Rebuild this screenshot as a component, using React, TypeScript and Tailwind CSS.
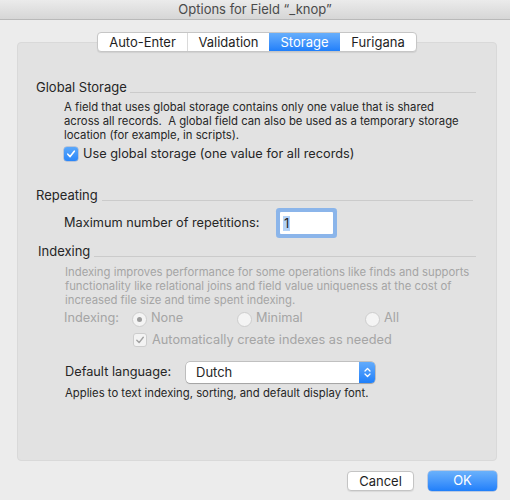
import React from 'react';

const font = { fontFamily: 'Inter, "Liberation Sans", Arial, sans-serif' };

function Heading({ label, gap = 'ml-[3px]' }: { label: string; gap?: string }) {
  return (
    <div className="flex h-[16px] items-end">
      <span className="text-[13px] leading-[16px] text-[#262626]">{label}</span>
      <div className={`mb-[2px] h-px flex-1 bg-[#cbcbcb] ${gap}`} />
    </div>
  );
}

function BlueCheck() {
  return (
    <span className="flex h-[14px] w-[14px] items-center justify-center rounded-[3px] bg-linear-to-b from-[#5aa8fb] to-[#2a86f9] shadow-[0_0_0_0.5px_rgba(0,60,160,0.35)]">
      <svg width="10" height="10" viewBox="0 0 10 10">
        <path d="M1.8 5.2 L4.1 7.6 L8.3 2.2" fill="none" stroke="#fff" strokeWidth="1.6" strokeLinecap="round" strokeLinejoin="round" />
      </svg>
    </span>
  );
}

function GrayCheck() {
  return (
    <span className="flex h-[14px] w-[14px] items-center justify-center rounded-[3px] border border-[#cdcdcd] bg-[#f3f3f3]">
      <svg width="10" height="10" viewBox="0 0 10 10">
        <path d="M1.8 5.2 L4.1 7.6 L8.3 2.2" fill="none" stroke="#a2a2a2" strokeWidth="1.4" strokeLinecap="round" strokeLinejoin="round" />
      </svg>
    </span>
  );
}

function Radio({ on }: { on?: boolean }) {
  return (
    <span className="mt-[3px] flex h-[15px] w-[15px] items-center justify-center rounded-full border border-[#cdcdcd] bg-[#f4f4f4]">
      {on && <span className="h-[5px] w-[5px] rounded-full bg-[#9c9c9c]" />}
    </span>
  );
}

export default function App() {
  return (
    <div className="flex h-[500px] w-[510px] flex-col overflow-hidden bg-[#ececec]" style={font}>
      {/* title bar */}
      <div className="flex h-[20px] items-center justify-center border-b border-[#b9b9b9] bg-linear-to-b from-[#ebebeb] to-[#d6d6d6] text-[13px] text-[#4a4a4a]">
        Options for Field “_knop”
      </div>

      {/* segmented tabs */}
      <div className="relative z-10 mt-[12px] flex pl-[97px]">
        <div className="flex h-[20px] overflow-hidden rounded-[4px] border border-[#c6c6c6] bg-white text-[13px] leading-[18px] text-[#1e1e1e] shadow-[0_1px_1px_rgba(0,0,0,0.08)]">
          <div className="flex w-[89px] items-center justify-center">Auto-Enter</div>
          <div className="flex w-[82px] items-center justify-center border-l border-[#dadada]">Validation</div>
          <div className="flex w-[71px] items-center justify-center bg-linear-to-b from-[#67aefb] to-[#1f7ffa] text-white">Storage</div>
          <div className="flex w-[76px] items-center justify-center">Furigana</div>
        </div>
      </div>

      {/* tab panel */}
      <div className="mx-[17px] mr-[13px] -mt-[10px] flex h-[419px] flex-col rounded-[4px] border border-[#d9d9d9] bg-[#e2e2e2] pl-[18px] pr-[20px] pt-[36px]">
        <Heading label="Global Storage" />
        <div className="ml-[28px] mt-[5px] text-[11.3px] leading-[14px] text-[#262626]">
          A field that uses global storage contains only one value that is shared
          <br />
          across all records.&nbsp; A global field can also be used as a temporary storage
          <br />
          location (for example, in scripts).
        </div>
        <div className="ml-[28px] mt-[4px] flex h-[16px] items-center gap-[5px] text-[12.75px] text-[#262626]">
          <BlueCheck />
          <span>Use global storage (one value for all records)</span>
        </div>

        <div className="mt-[25px] pr-[3px]">
          <Heading label="Repeating" gap="ml-[4px]" />
        </div>
        <div className="ml-[28px] mt-[9px] flex h-[22px] items-center text-[12.75px] text-[#262626]">
          <span className="w-[216px]">Maximum number of repetitions:</span>
          <div className="flex h-[22px] w-[53px] items-center rounded-[1px] bg-white pl-[3px] ring-[4px] ring-[#8bb5ea]">
            <span className="bg-[#b4d3f8] px-[1px] text-[13px] leading-[15px]">1</span>
          </div>
        </div>

        <div className="ml-[2px] mt-[9px]">
          <Heading label="Indexing" gap="ml-[4px]" />
        </div>
        <div className="ml-[29px] mt-[6px] text-[11.3px] leading-[14px] text-[#a5a5a5]">
          Indexing improves performance for some operations like finds and supports
          <br />
          functionality like relational joins and field value uniqueness at the cost of
          <br />
          increased file size and time spent indexing.
        </div>
        <div className="ml-[28px] mt-[3px] flex h-[16px] items-center text-[12.75px] text-[#a5a5a5]">
          <span className="w-[68px]">Indexing:</span>
          <div className="flex w-[105px] items-center gap-[4px]">
            <Radio on />
            <span>None</span>
          </div>
          <div className="flex w-[128px] items-center gap-[4px]">
            <Radio />
            <span>Minimal</span>
          </div>
          <div className="flex items-center gap-[4px]">
            <Radio />
            <span>All</span>
          </div>
        </div>
        <div className="ml-[97px] mt-[6px] flex h-[16px] items-center gap-[5px] text-[12.75px] text-[#a5a5a5]">
          <GrayCheck />
          <span>Automatically create indexes as needed</span>
        </div>

        <div className="ml-[29px] mt-[13px] flex h-[22px] items-center text-[12.75px] text-[#262626]">
          <span className="w-[121px]">Default language:</span>
          <div className="flex h-[21px] w-[189px] overflow-hidden rounded-[4px] bg-white shadow-[0_0_0_0.5px_rgba(0,0,0,0.3),0_1px_1px_rgba(0,0,0,0.15)]">
            <span className="flex-1 pl-[10px] text-[13px] leading-[21px]">Dutch</span>
            <span className="flex w-[16px] items-center justify-center bg-linear-to-b from-[#62abfb] to-[#1e80fa]">
              <svg width="9" height="13" viewBox="0 0 9 13">
                <path d="M2 5 L4.5 2.5 L7 5 M2 8 L4.5 10.5 L7 8" fill="none" stroke="#fff" strokeWidth="1.3" strokeLinecap="round" strokeLinejoin="round" />
              </svg>
            </span>
          </div>
        </div>
        <div className="ml-[29px] mt-[3px] text-[11.3px] leading-[14px] text-[#262626]">
          Applies to text indexing, sorting, and default display font.
        </div>
      </div>

      {/* buttons */}
      <div className="mt-[10px] flex justify-end gap-[14px] pr-[13px] text-[13px]">
        <button className="h-[20px] w-[67px] rounded-[4px] border border-[#c4c4c4] bg-white text-[#1e1e1e] shadow-[0_1px_1px_rgba(0,0,0,0.08)]">
          Cancel
        </button>
        <button className="h-[20px] w-[69px] rounded-[4px] bg-linear-to-b from-[#6ab1fb] to-[#1f7ffa] text-white shadow-[0_0_0_0.5px_rgba(0,70,180,0.4)]">
          OK
        </button>
      </div>
    </div>
  );
}
